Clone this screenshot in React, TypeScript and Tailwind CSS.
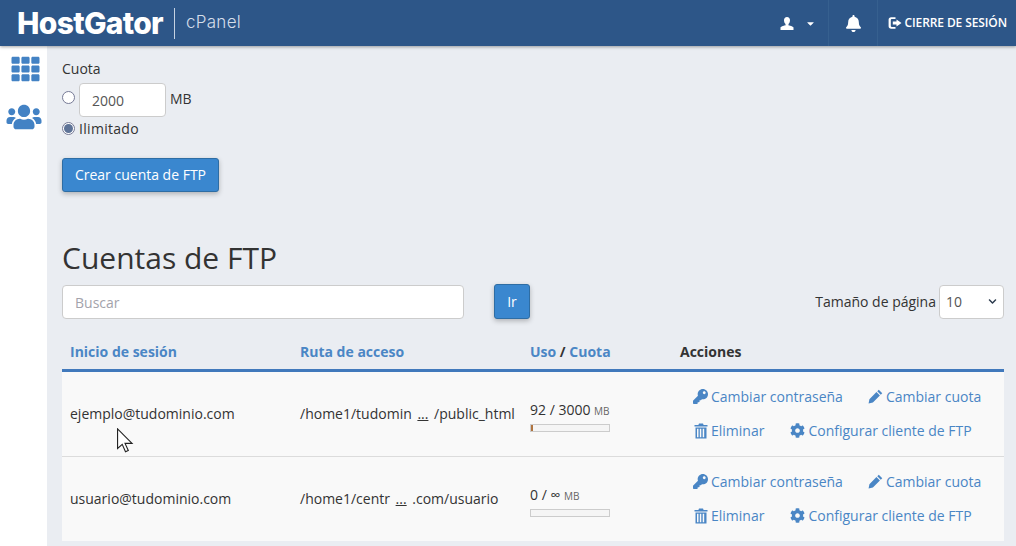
import { FaTh, FaUsers, FaKey, FaCog, FaBell, FaCaretDown, FaChevronDown } from "react-icons/fa";

const accounts = [
  { login: "ejemplo@tudominio.com", pathA: "/home1/tudomin", pathB: "/public_html", used: "92 / 3000", pct: "w-[2px]" },
  { login: "usuario@tudominio.com", pathA: "/home1/centr", pathB: ".com/usuario", used: "0 / ∞", pct: "w-0" },
];

function LogoutIcon() {
  return (
    <svg viewBox="0 0 14 14" className="w-[14px] h-[14px]" fill="currentColor">
      <path d="M3.200 1.200H7.500v1.900H3.600c-.5 0-.8.3-.8.8v6.200c0 .5.3.8.8.8h3.900v1.900H3.200C1.600 12.800.6 11.800.6 10.300V3.700c0-1.500 1-2.500 2.600-2.500z" />
      <path d="M8.500 3.600L13.500 7l-5 3.400V8.500H4.800v-3h3.700z" />
    </svg>
  );
}

function UserIcon() {
  return (
    <svg viewBox="0 0 14 13" className="w-[14px] h-[13px]" fill="currentColor">
      <path d="M7 0c1.900 0 3 1.300 3 3.200 0 1.500-.6 3-1.500 3.800v1.300c.6.400 4.500 1 5 2.200V13H.5v-2.500c.5-1.200 4.400-1.800 5-2.200V7C4.600 6.200 4 4.700 4 3.200 4 1.300 5.100 0 7 0z" />
    </svg>
  );
}

function TrashIcon() {
  return (
    <svg viewBox="0 0 14 16" className="ml-[1px] w-[14px] h-[16px]" fill="currentColor">
      <path d="M5 .5h4l.6 1.500H13.500v1.600H.5V2h3.900z" />
      <path d="M1.500 4.500h11V15.500h-11zM3 5.700v8.500h1.500V5.700zm2.800 0v8.500h1.500V5.700zm2.900 0v8.500h1.500V5.700z" fillRule="evenodd" />
    </svg>
  );
}

function PencilIcon() {
  return (
    <svg viewBox="0 0 16 16" className="w-[15px] h-[15px]" fill="currentColor">
      <path d="M11.500.8l3.700 3.700-1.600 1.600-3.700-3.700zM9 3.300L12.700 7l-7.500 7.500L.6 15.400l.9-4.600z" />
    </svg>
  );
}

function Action({ icon, label }: { icon: React.ReactNode; label: string }) {
  return (
    <span className="inline-flex items-center gap-[3px] text-[#4a86c5] text-[14px]">
      {icon}
      {label}
    </span>
  );
}

export default function App() {
  return (
    <div className="h-[546px] w-[1016px] overflow-hidden flex flex-col bg-white text-[14px] text-[#333] font-['Open_Sans',sans-serif]">
      <header className="relative z-10 h-[46px] shrink-0 bg-[#2d5688] text-white flex items-center shadow-[0_1px_3px_rgba(0,0,0,0.35)]">
        <span className="ml-[17px] text-[30px] leading-none font-extrabold tracking-[-0.7px] font-['Inter',sans-serif]">HostGator</span>
        <span className="ml-[11px] h-[31px] w-px bg-[#c5d2e2]" />
        <span className="ml-[11px] text-[17px] text-[#d5deea] tracking-[0.3px] font-['Inter',sans-serif] font-light">cPanel</span>
        <div className="ml-auto flex h-full items-center">
          <div className="flex h-full w-[49px] items-center border-r border-[#36608f]">
            <UserIcon />
            <FaCaretDown className="ml-[11px] text-[11px]" />
          </div>
          <div className="flex h-full w-[49px] items-center justify-center border-r border-[#36608f]">
            <FaBell className="text-[17px]" />
          </div>
          <div className="flex h-full items-center gap-[2px] pl-[10px] pr-[9px] text-[12px] font-semibold tracking-[-0.1px]">
            <LogoutIcon />
            CIERRE DE SESIÓN
          </div>
        </div>
      </header>
      <div className="flex flex-1 min-h-0">
        <aside className="w-[47px] shrink-0 flex flex-col items-center pt-[9px] text-[#4382c4]">
          <FaTh className="text-[30px] h-[28px] w-[29px] ml-[3px]" />
          <FaUsers className="mt-[20px] text-[36px] h-[28px]" />
        </aside>
        <main className="flex-1 bg-[#eaedf2] pl-[15px] pr-[12px] pt-[13px]">
          <label className="block leading-[19px] text-[14px]">Cuota</label>
          <div className="mt-[5px] flex items-start">
            <span className="mt-[8px] h-[13px] w-[13px] rounded-full border border-[#767a96] bg-white" />
            <input readOnly value="2000" className="ml-[4px] h-[34px] w-[87px] rounded border border-[#ccc] bg-white px-[12px] text-[14px] text-[#555] outline-none" />
            <span className="ml-[4px] mt-[6px] leading-[19px]">MB</span>
          </div>
          <div className="mt-[2px] flex items-center h-[19px]">
            <span className="flex h-[13px] w-[13px] items-center justify-center rounded-full border border-[#767a96] bg-white">
              <span className="h-[9px] w-[9px] rounded-full bg-[#5e7397]" />
            </span>
            <span className="ml-[4px] font-medium tracking-[0.3px]">Ilimitado</span>
          </div>
          <button className="mt-[20px] block h-[34px] w-[157px] rounded-[3px] border border-[#2e6da4] bg-[#3a87cf] pb-[1px] text-white shadow-[0_2px_5px_rgba(0,0,0,0.25)]">
            Crear cuenta de FTP
          </button>
          <h1 className="mt-[46px] text-[30px] leading-[40px] text-[#333]">Cuentas de FTP</h1>
          <div className="mt-[6px] flex items-center">
            <div className="h-[34px] w-[402px] rounded border border-[#ccc] bg-white px-[12px] leading-[33px] text-[#a3a3ab]">Buscar</div>
            <button className="ml-[30px] h-[35px] w-[36px] rounded-[3px] border border-[#2e6da4] bg-[#3a87cf] text-white shadow-[0_2px_5px_rgba(0,0,0,0.25)]">Ir</button>
            <span className="ml-auto">Tamaño de página</span>
            <div className="ml-[3px] flex h-[34px] w-[65px] items-center justify-between rounded border border-[#ccc] bg-white pl-[6px] pr-[6px] text-[#555]">
              10
              <FaChevronDown className="text-[9px] text-[#2b3a4d]" />
            </div>
          </div>
          <table className="mt-[14px] w-[942px] table-fixed border-collapse">
            <thead>
              <tr className="h-[37px] border-b-[3px] border-[#4179bc] text-left font-bold">
                <th className="w-[230px] pl-[8px] pt-[2px] text-[#4a86c5]">Inicio de sesión</th>
                <th className="w-[230px] pl-[8px] pt-[2px] text-[#4a86c5]">Ruta de acceso</th>
                <th className="w-[150px] pl-[8px] pt-[2px] text-[#4a86c5]">Uso <span className="text-[#333]">/</span> Cuota</th>
                <th className="pl-[8px] pt-[2px]">Acciones</th>
              </tr>
            </thead>
            <tbody>
              {accounts.map((a) => (
                <tr key={a.login} className="h-[86px] border-b border-[#dcdcdc] bg-[#f9f9f9] last:h-[85px] last:border-b-0">
                  <td className="pl-[8px]">{a.login}</td>
                  <td className="pl-[8px] whitespace-nowrap">
                    {a.pathA} <span className="mx-[2px] underline">...</span> {a.pathB}
                  </td>
                  <td className="pl-[8px] pt-[4px]">
                    <div className="leading-[19px] whitespace-nowrap">
                      {a.used} <span className="text-[10px] text-[#666]">MB</span>
                    </div>
                    <div className="mt-[3px] h-[8px] w-[80px] border border-[#ccc] bg-[#f5f5f5]">
                      <div className={`h-full bg-[#b0743f] ${a.pct}`} />
                    </div>
                  </td>
                  <td className="pl-[21px] whitespace-nowrap">
                    <div className="flex h-[34px] items-center gap-[25px]">
                      <Action icon={<FaKey className="text-[15px]" />} label="Cambiar contraseña" />
                      <Action icon={<PencilIcon />} label="Cambiar cuota" />
                    </div>
                    <div className="flex h-[34px] items-center gap-[26px]">
                      <Action icon={<TrashIcon />} label="Eliminar" />
                      <Action icon={<FaCog className="text-[15px]" />} label="Configurar cliente de FTP" />
                    </div>
                  </td>
                </tr>
              ))}
            </tbody>
          </table>
        </main>
      </div>
      <svg viewBox="0 0 20 30" className="absolute left-[116px] top-[428px] h-[28px] w-[19px]" fill="white" stroke="#222" strokeWidth="1.200">
        <path d="M1.500 1v21l5-4.500 3.500 8 3-1.300-3.500-7.700H17z" />
      </svg>
    </div>
  );
}
